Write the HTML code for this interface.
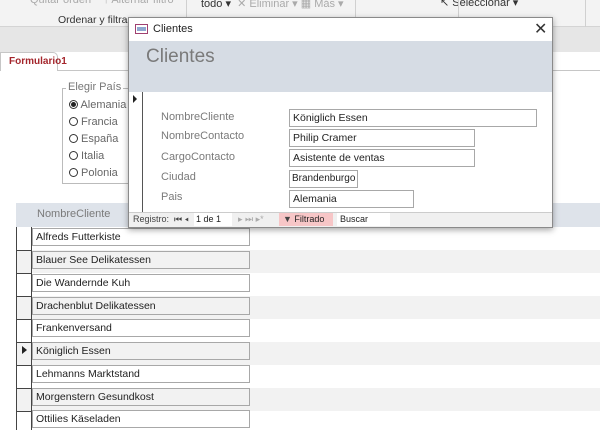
<!DOCTYPE html>
<html><head><meta charset="utf-8"><style>
*{margin:0;padding:0;box-sizing:border-box}
body{width:600px;height:430px;overflow:hidden;background:#fff;font-family:"Liberation Sans",sans-serif;font-size:11px;position:relative;color:#222}
.a{position:absolute}
.rib{left:0;top:0;width:600px;height:27px;background:#f3f3f3;border-bottom:1px solid #d4d4d4}
.band{left:0;top:27px;width:600px;height:25px;background:#e6e6e6}
.sep{width:1px;background:#d0d0d0;top:0;height:27px}
.tb{background:#fff;border:1px solid #a8a8a8;height:18px;font-size:10.5px;line-height:16px;padding-left:3px;color:#222;white-space:nowrap;overflow:hidden}
.lab{color:#7a7a7a;font-size:11px}
.row{left:16px;width:584px;height:23px}
</style></head><body>
<div class="a rib"></div>
<div class="a" style="left:30px;top:-6px;color:#aaa;font-size:11px">Quitar orden &nbsp;&nbsp; ↑ Alternar filtro</div>
<div class="a" style="left:58px;top:14px;font-size:10.5px;color:#333">Ordenar y filtrar</div>
<div class="a sep" style="left:186px"></div>
<div class="a" style="left:201px;top:-3px;color:#333">todo ▾ &nbsp;<span style="color:#aaa">✕ Eliminar ▾ ▦ Más ▾</span></div>
<div class="a sep" style="left:355px"></div>
<div class="a" style="left:440px;top:-4px;color:#333">↖ Seleccionar ▾</div>
<div class="a sep" style="left:458px"></div>
<div class="a sep" style="left:585px"></div>
<div class="a band"></div>
<div class="a" style="left:0;top:70px;width:600px;height:1px;background:#c6c6c6"></div>
<div class="a" style="left:0;top:52px;width:58px;height:19px;background:#fff;border:1px solid #c6c6c6;border-bottom:none;border-radius:0 5px 0 0"></div>
<div class="a" style="left:9px;top:56px;color:#a4262c;font-size:10px;font-weight:bold">Formulario1</div>
<div class="a" style="left:62px;top:88px;width:80px;height:96px;border:1px solid #bbb"></div>
<div class="a" style="left:66px;top:81px;background:#fff;padding:0 2px;color:#777;font-size:11px">Elegir País</div>
<div class="a" style="left:69px;top:97px;line-height:17px;color:#666;font-size:11px">
<div><span style="display:inline-block;width:9px;height:9px;border:1px solid #333;border-radius:50%;vertical-align:-1px;position:relative"><span style="position:absolute;left:1px;top:1px;width:5px;height:5px;background:#222;border-radius:50%"></span></span> Alemania</div>
<div><span style="display:inline-block;width:9px;height:9px;border:1px solid #333;border-radius:50%;vertical-align:-1px"></span> Francia</div>
<div><span style="display:inline-block;width:9px;height:9px;border:1px solid #333;border-radius:50%;vertical-align:-1px"></span> España</div>
<div><span style="display:inline-block;width:9px;height:9px;border:1px solid #333;border-radius:50%;vertical-align:-1px"></span> Italia</div>
<div><span style="display:inline-block;width:9px;height:9px;border:1px solid #333;border-radius:50%;vertical-align:-1px"></span> Polonia</div>
</div>

<div class="a" style="left:16px;top:203px;width:584px;height:24px;background:#dee3ea"></div>
<div class="a lab" style="left:37px;top:208px">NombreCliente</div>

<div class="a row" style="top:227px;background:#fff"></div>
<div class="a row" style="top:250px;background:#f2f2f2"></div>
<div class="a row" style="top:273px;background:#fff"></div>
<div class="a row" style="top:296px;background:#f2f2f2"></div>
<div class="a row" style="top:319px;background:#fff"></div>
<div class="a row" style="top:342px;background:#f2f2f2"></div>
<div class="a row" style="top:365px;background:#fff"></div>
<div class="a row" style="top:388px;background:#f2f2f2"></div>
<div class="a row" style="top:411px;background:#fff"></div>
<div class="a" style="left:16px;top:227px;width:1px;height:203px;background:#444"></div>
<div class="a" style="left:31px;top:227px;width:1px;height:203px;background:#444"></div>
<div class="a" style="left:16px;top:250px;width:16px;height:1px;background:#444"></div>
<div class="a" style="left:16px;top:273px;width:16px;height:1px;background:#444"></div>
<div class="a" style="left:16px;top:296px;width:16px;height:1px;background:#444"></div>
<div class="a" style="left:16px;top:319px;width:16px;height:1px;background:#444"></div>
<div class="a" style="left:16px;top:342px;width:16px;height:1px;background:#444"></div>
<div class="a" style="left:16px;top:365px;width:16px;height:1px;background:#444"></div>
<div class="a" style="left:16px;top:388px;width:16px;height:1px;background:#444"></div>
<div class="a" style="left:16px;top:411px;width:16px;height:1px;background:#444"></div>
<div class="a" style="left:22px;top:346px;width:0;height:0;border-left:5px solid #222;border-top:4px solid transparent;border-bottom:4px solid transparent"></div>
<div class="a tb" style="left:32px;top:228px;width:218px">Alfreds Futterkiste</div>
<div class="a tb" style="left:32px;top:251px;width:218px;background:#f2f2f2">Blauer See Delikatessen</div>
<div class="a tb" style="left:32px;top:274px;width:218px">Die Wandernde Kuh</div>
<div class="a tb" style="left:32px;top:297px;width:218px;background:#f2f2f2">Drachenblut Delikatessen</div>
<div class="a tb" style="left:32px;top:319px;width:218px">Frankenversand</div>
<div class="a tb" style="left:32px;top:342px;width:218px;background:#f2f2f2">Königlich Essen</div>
<div class="a tb" style="left:32px;top:365px;width:218px">Lehmanns Marktstand</div>
<div class="a tb" style="left:32px;top:388px;width:218px;background:#f2f2f2">Morgenstern Gesundkost</div>
<div class="a tb" style="left:32px;top:410px;width:218px">Ottilies Käseladen</div>

<!-- dialog -->
<div class="a" style="left:128px;top:17px;width:425px;height:211px;background:#fff;border:1px solid #8a8a8a;box-shadow:0 2px 6px rgba(0,0,0,.35)"></div>
<div class="a" style="left:135px;top:24px;width:13px;height:10px;border:1px solid #a04070;background:#fff"><div style="margin:2px 1px;height:4px;background:#8fa8d0"></div></div>
<div class="a" style="left:153px;top:23px;font-size:11px;color:#222">Clientes</div>
<div class="a" style="left:534px;top:19px;font-size:16px;color:#333">✕</div>
<div class="a" style="left:129px;top:41px;width:423px;height:51px;background:#d6dce4"></div>
<div class="a" style="left:146px;top:46px;font-size:19px;color:#7a7a7a">Clientes</div>
<div class="a" style="left:129px;top:92px;width:14px;height:120px;border-right:1px solid #555"></div>
<div class="a" style="left:133px;top:95px;width:0;height:0;border-left:4px solid #222;border-top:4px solid transparent;border-bottom:4px solid transparent"></div>
<div class="a lab" style="left:161px;top:111px">NombreCliente</div>
<div class="a lab" style="left:161px;top:130px">NombreContacto</div>
<div class="a lab" style="left:161px;top:151px">CargoContacto</div>
<div class="a lab" style="left:161px;top:171px">Ciudad</div>
<div class="a lab" style="left:161px;top:191px">Pais</div>
<div class="a tb" style="left:289px;top:109px;width:248px">Königlich Essen</div>
<div class="a tb" style="left:289px;top:129px;width:186px">Philip Cramer</div>
<div class="a tb" style="left:289px;top:149px;width:186px">Asistente de ventas</div>
<div class="a tb" style="left:289px;top:170px;width:69px;font-size:10px;padding-left:2px">Brandenburgo</div>
<div class="a tb" style="left:289px;top:190px;width:125px">Alemania</div>
<div class="a" style="left:129px;top:212px;width:423px;height:15px;background:#f0f0f0;border-top:1px solid #ccc"></div>
<div class="a" style="left:133px;top:214px;font-size:9px;color:#444">Registro: &nbsp;⏮ ◂</div>
<div class="a" style="left:194px;top:213px;width:38px;height:13px;background:#fff;font-size:9px;padding-left:2px;line-height:13px">1 de 1</div>
<div class="a" style="left:238px;top:214px;font-size:9px;color:#aaa">▸ ⏭ ▸*</div>
<div class="a" style="left:279px;top:213px;width:54px;height:13px;background:#f7c6c7;font-size:9px;line-height:13px;padding-left:4px;color:#222"><span style="color:#444">▼</span> Filtrado</div>
<div class="a" style="left:337px;top:213px;width:53px;height:13px;background:#fff;font-size:9px;line-height:13px;padding-left:3px">Buscar</div>
</body></html>
